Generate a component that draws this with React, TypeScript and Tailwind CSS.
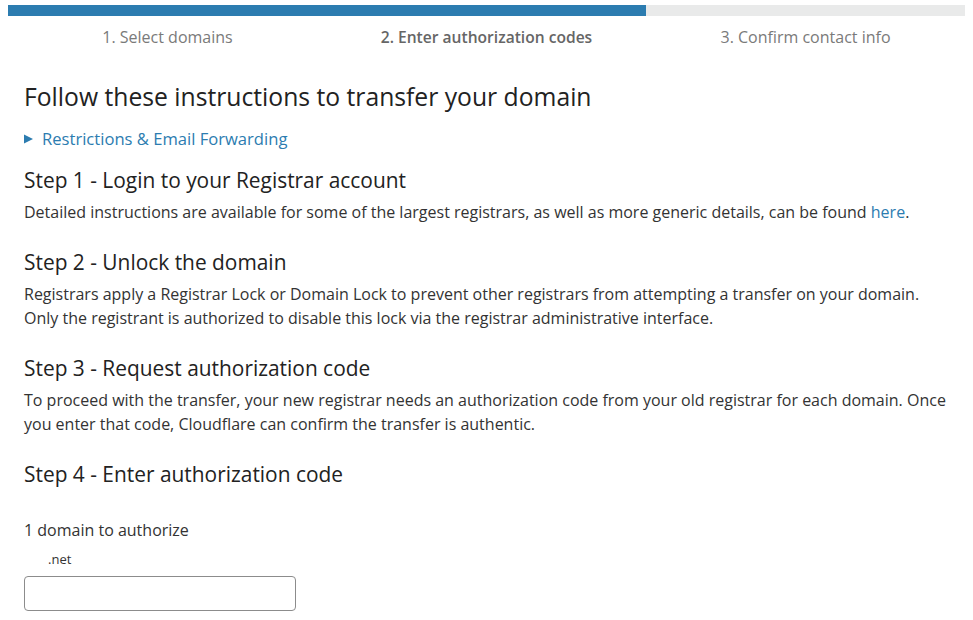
import React from "react";

const font = { fontFamily: '"Open Sans", "Noto Sans", sans-serif' };

export default function App() {
  return (
    <div className="min-h-[620px] bg-white text-[#333]" style={font}>
      <div className="px-2 pt-[5px]">
        <div className="flex h-[11px] w-full bg-[#e9eaea]">
          <div className="h-full w-2/3 bg-[#2c7cb0]" />
        </div>
        <div className="grid grid-cols-3 pt-[10px] text-[16px] leading-[22px]">
          <div className="text-center text-[#7a7a7a]">1. Select domains</div>
          <div className="text-center text-[15.6px] font-semibold text-[#666]">2. Enter authorization codes</div>
          <div className="text-center text-[#7a7a7a]">3. Confirm contact info</div>
        </div>
      </div>
      <div className="px-6">
        <h1 className="mt-[32px] text-[24.7px] leading-[34px] text-[#222]">
          Follow these instructions to transfer your domain
        </h1>
        <div className="mt-[13px] flex items-center gap-[8px] text-[16.6px] leading-[24px] text-[#2c7cb0]">
          <svg width="10" height="10" viewBox="0 0 10 10">
            <path d="M0 0.5 L9 5 L0 9.5 Z" fill="#2c7cb0" />
          </svg>
          <span>Restrictions &amp; Email Forwarding</span>
        </div>
        <h2 className="mt-[15px] text-[20.9px] leading-[28px] text-[#222]">Step 1 - Login to your Registrar account</h2>
        <p className="mt-[6px] text-[16px] leading-[24px]">
          Detailed instructions are available for some of the largest registrars, as well as more generic details, can be found{" "}
          <span className="text-[#2c7cb0]">here</span>.
        </p>
        <h2 className="mt-[24px] text-[20.9px] leading-[28px] text-[#222]">Step 2 - Unlock the domain</h2>
        <p className="mt-[6px] text-[16px] leading-[24px]">
          Registrars apply a Registrar Lock or Domain Lock to prevent other registrars from attempting a transfer on your domain.
          <br />
          Only the registrant is authorized to disable this lock via the registrar administrative interface.
        </p>
        <h2 className="mt-[24px] text-[20.9px] leading-[28px] text-[#222]">Step 3 - Request authorization code</h2>
        <p className="mt-[6px] text-[16px] leading-[24px]">
          To proceed with the transfer, your new registrar needs an authorization code from your old registrar for each domain. Once
          <br />
          you enter that code, Cloudflare can confirm the transfer is authentic.
        </p>
        <h2 className="mt-[24px] text-[20.9px] leading-[28px] text-[#222]">Step 4 - Enter authorization code</h2>
        <div className="mt-[30px] text-[16px] leading-[24px]">1 domain to authorize</div>
        <div className="mt-[8px] pl-6 text-[13px] leading-[18px] text-[#333]">.net</div>
        <input className="mt-[8px] h-[35px] w-[272px] rounded-[4px] border border-[#8c8c8c] bg-white px-2 outline-none" />
      </div>
    </div>
  );
}
